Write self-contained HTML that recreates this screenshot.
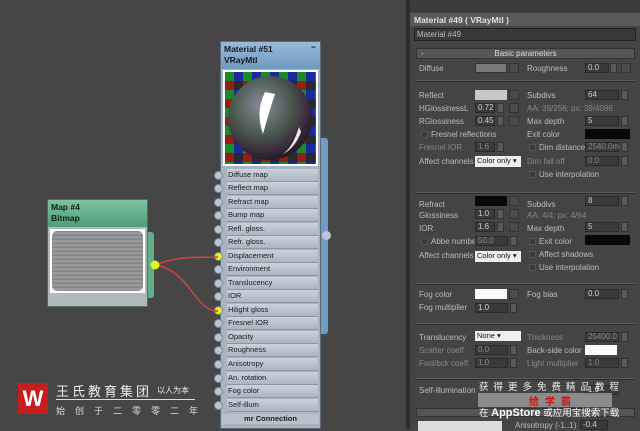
<!DOCTYPE html><html><head><meta charset="utf-8"><style>
*{margin:0;padding:0;box-sizing:border-box}
body{width:640px;height:429px;background:#464646;position:relative;overflow:hidden;font-family:"Liberation Sans","Noto Sans CJK SC",sans-serif;font-size:8px;color:#c8c8c8}
.a{position:absolute}
.l{position:absolute;font-size:8px;color:#bdbdbd;white-space:nowrap}
.f{position:absolute;height:10px;background:#3a3a3a;border:1px solid #2a2a2a;color:#ccc;font-size:8px;padding-left:2px;line-height:8px}
.sp{position:absolute;width:7px;height:10px;background:#5a5a5a;border:1px solid #333}
.sq{position:absolute;width:10px;height:10px;background:#4a4a4a;border:1px solid #333}
.cb{position:absolute;width:7px;height:7px;background:#3a3a3a;border:1px solid #555}
.sec{position:absolute;left:414px;width:221px;border:1px solid #2e2e2e;border-top-color:#5a5a5a}
.row{position:absolute;left:227px;width:91px;height:13px;background:linear-gradient(#c9d2dc,#aab6c2);border-bottom:1px solid #8b97a3;font-size:7.5px;color:#1a1a1a;padding-left:1px;line-height:12px}
.dot{position:absolute;left:214px;width:9px;height:9px;border-radius:50%;background:#b9c4d4;border:1px solid #7b8896}
</style></head><body>
<div class="a" style="left:406px;top:0;width:4px;height:429px;background:#2e2e2e"></div>
<div class="a" style="left:320px;top:138px;width:8px;height:196px;background:#6e9cc4;border-radius:0 3px 3px 0"></div>
<div class="a" style="left:322px;top:231px;width:9px;height:9px;border-radius:50%;background:#b9c4d4"></div>
<div class="a" style="left:220px;top:41px;width:101px;height:388px;background:#a8b4c0;border:1px solid #5d6b78"></div>
<div class="a" style="left:221px;top:42px;width:99px;height:27px;background:linear-gradient(#9bbad6,#6f9ac0);font-weight:bold;font-size:8.5px;color:#0f1a25;padding:2px 3px;line-height:11px">Material #51<br>VRayMtl<span style="position:absolute;right:4px;top:0">−</span></div>
<div class="a" style="left:223px;top:70px;width:95px;height:96px;background:#fff;padding:2px">
<svg width="91" height="92" viewBox="0 0 91 92"><defs><pattern id="ck" width="18" height="18" patternUnits="userSpaceOnUse"><rect width="9" height="9" fill="#1a8a2a"/><rect x="9" width="9" height="9" fill="#1a2a9a"/><rect y="9" width="9" height="9" fill="#9a1a1a"/><rect x="9" y="9" width="9" height="9" fill="#2a2a2a"/></pattern><radialGradient id="sp" cx="0.4" cy="0.35" r="0.7"><stop offset="0" stop-color="#8a8a9a"/><stop offset="0.5" stop-color="#4a5a50"/><stop offset="0.8" stop-color="#3a2a3a"/><stop offset="1" stop-color="#1a1a1a"/></radialGradient></defs><rect width="91" height="92" fill="url(#ck)"/><circle cx="45" cy="46" r="42" fill="url(#sp)"/><path d="M40 20 Q30 40 38 62 Q44 40 50 22Z" fill="#fff"/><path d="M74 55 Q68 75 58 82 Q70 76 76 60Z" fill="#eee"/></svg></div>
<div class="row" style="top:169px">Diffuse map</div><div class="dot" style="top:171px"></div>
<div class="row" style="top:182px">Reflect map</div><div class="dot" style="top:184px"></div>
<div class="row" style="top:196px">Refract map</div><div class="dot" style="top:198px"></div>
<div class="row" style="top:209px">Bump map</div><div class="dot" style="top:211px"></div>
<div class="row" style="top:223px">Refl. gloss.</div><div class="dot" style="top:225px"></div>
<div class="row" style="top:236px">Refr. gloss.</div><div class="dot" style="top:238px"></div>
<div class="row" style="top:250px">Displacement</div><div class="dot" style="top:252px;background:#e3f020"></div>
<div class="row" style="top:263px">Environment</div><div class="dot" style="top:265px"></div>
<div class="row" style="top:277px">Translucency</div><div class="dot" style="top:279px"></div>
<div class="row" style="top:290px">IOR</div><div class="dot" style="top:292px"></div>
<div class="row" style="top:304px">Hilight gloss</div><div class="dot" style="top:306px;background:#e3f020"></div>
<div class="row" style="top:317px">Fresnel IOR</div><div class="dot" style="top:319px"></div>
<div class="row" style="top:331px">Opacity</div><div class="dot" style="top:333px"></div>
<div class="row" style="top:344px">Roughness</div><div class="dot" style="top:346px"></div>
<div class="row" style="top:358px">Anisotropy</div><div class="dot" style="top:360px"></div>
<div class="row" style="top:372px">An. rotation</div><div class="dot" style="top:374px"></div>
<div class="row" style="top:385px">Fog color</div><div class="dot" style="top:387px"></div>
<div class="row" style="top:399px">Self-illum</div><div class="dot" style="top:401px"></div>
<div class="a" style="left:222px;top:414px;width:97px;height:10px;background:#b8c2cc;font-size:7.5px;color:#1a1a1a;text-align:center;font-weight:bold;line-height:10px">mr Connection</div>
<div class="a" style="left:146px;top:232px;width:8px;height:66px;background:#5fb08a;border-radius:0 3px 3px 0"></div>
<div class="a" style="left:47px;top:199px;width:101px;height:108px;background:#b0b8bc;border:1px solid #5a6a60"></div>
<div class="a" style="left:48px;top:200px;width:99px;height:27px;background:linear-gradient(#7fc3a0,#4f9e78);font-weight:bold;font-size:8.5px;color:#0f2015;padding:2px 3px;line-height:11px">Map #4<br>Bitmap</div>
<div class="a" style="left:50px;top:229px;width:95px;height:64px;background:#fff;padding:2px"><div style="width:91px;height:60px;border-radius:5px;background:repeating-linear-gradient(#858585 0 1px,#999 1px 3px,#909090 3px 4px)"></div></div>
<svg class="a" style="left:150px;top:250px" width="80" height="70"><path d="M5 15 C30 5 50 8 68 7" stroke="#c44" stroke-width="1.5" fill="none"/><path d="M5 15 C40 20 45 62 68 61" stroke="#c44" stroke-width="1.5" fill="none"/><circle cx="5" cy="15" r="4.5" fill="#e3f020"/></svg>
<div class="a" style="left:18px;top:383px;width:30px;height:31px;background:#c41e1e;color:#fff;font-weight:bold;font-size:22px;text-align:center;line-height:31px">W</div>
<div class="a" style="left:56px;top:381px;font-size:13px;color:#eee;letter-spacing:3px">王氏教育集团</div>
<div class="a" style="left:157px;top:385px;font-size:8px;color:#eee">以人为本</div>
<div class="a" style="left:56px;top:399px;width:139px;height:1px;background:#ddd"></div>
<div class="a" style="left:56px;top:404px;font-size:9px;color:#ddd;letter-spacing:10px">始创于二零零二年</div>
<div class="a" style="left:410px;top:0;width:230px;height:429px;background:#444"></div>
<div class="a" style="left:410px;top:0;width:230px;height:12px;background:#3b3b3b"></div>
<div class="a" style="left:410px;top:13px;width:230px;height:13px;background:#595959;font-weight:bold;color:#e0e0e0;font-size:8.5px;padding:2px 4px">Material #49 ( VRayMtl )</div>
<div class="a" style="left:414px;top:28px;width:222px;height:13px;background:#383838;border:1px solid #222;padding:1px 2px;color:#bbb">Material #49</div>
<div class="a" style="left:416px;top:48px;width:219px;height:11px;background:#555;border:1px solid #333;text-align:center;color:#ddd;line-height:9px">Basic parameters<span style="position:absolute;left:4px">-</span></div>
<div class="sec" style="top:80px;height:1px"></div><div class="sec" style="top:192px;height:1px"></div><div class="sec" style="top:283px;height:1px"></div><div class="sec" style="top:323px;height:1px"></div><div class="sec" style="top:378px;height:1px"></div>
<div class="l" style="left:419px;top:64px">Diffuse</div><div class="a" style="left:475px;top:63px;width:32px;height:10px;background:#787878;border:1px solid #333"></div><div class="sq" style="left:509px;top:63px"></div>
<div class="l" style="left:527px;top:64px">Roughness</div><div class="f" style="left:585px;top:63px;width:24px">0.0</div><div class="sp" style="left:610px;top:63px"></div><div class="sq" style="left:621px;top:63px"></div>
<div class="l" style="left:419px;top:91px">Reflect</div><div class="a" style="left:475px;top:90px;width:32px;height:10px;background:#c8c8c8"></div><div class="sq" style="left:509px;top:90px"></div>
<div class="l" style="left:527px;top:91px">Subdivs</div><div class="f" style="left:585px;top:90px;width:34px">64</div><div class="sp" style="left:621px;top:90px"></div>
<div class="l" style="left:419px;top:104px">HGlossiness</div><div class="l" style="left:464px;top:104px">L</div><div class="f" style="left:475px;top:103px;width:20px">0.72</div><div class="sp" style="left:497px;top:103px"></div><div class="sq" style="left:509px;top:103px"></div>
<div class="l" style="left:527px;top:104px;color:#888">AA: 39/256; px: 39/4096</div>
<div class="l" style="left:419px;top:117px">RGlossiness</div><div class="f" style="left:475px;top:116px;width:20px">0.45</div><div class="sp" style="left:497px;top:116px"></div><div class="sq" style="left:509px;top:116px"></div>
<div class="l" style="left:527px;top:117px">Max depth</div><div class="f" style="left:585px;top:116px;width:34px">5</div><div class="sp" style="left:621px;top:116px"></div>
<div class="cb" style="left:421px;top:131px"></div><div class="l" style="left:431px;top:130px">Fresnel reflections</div>
<div class="l" style="left:527px;top:130px">Exit color</div><div class="a" style="left:585px;top:129px;width:45px;height:10px;background:#080808"></div>
<div class="l" style="left:419px;top:143px;color:#888">Fresnel IOR</div><div class="f" style="left:475px;top:142px;width:20px;color:#888">1.6</div><div class="sp" style="left:497px;top:142px"></div>
<div class="cb" style="left:529px;top:144px"></div><div class="l" style="left:539px;top:143px">Dim distance</div><div class="f" style="left:585px;top:142px;width:34px;color:#888">2540.0m</div><div class="sp" style="left:621px;top:142px"></div>
<div class="l" style="left:419px;top:157px">Affect channels</div><div class="a" style="left:475px;top:156px;width:46px;height:11px;background:#eee;color:#111;font-size:7.5px;padding-left:2px">Color only ▾</div>
<div class="l" style="left:527px;top:157px;color:#888">Dim fall off</div><div class="f" style="left:585px;top:156px;width:34px;color:#888">0.0</div><div class="sp" style="left:621px;top:156px"></div>
<div class="cb" style="left:529px;top:171px"></div><div class="l" style="left:539px;top:170px">Use interpolation</div>
<div class="l" style="left:419px;top:200px">Refract</div><div class="a" style="left:475px;top:196px;width:32px;height:10px;background:#080808"></div><div class="sq" style="left:509px;top:196px"></div>
<div class="l" style="left:527px;top:200px">Subdivs</div><div class="f" style="left:585px;top:196px;width:34px">8</div><div class="sp" style="left:621px;top:196px"></div>
<div class="l" style="left:419px;top:211px">Glossiness</div><div class="f" style="left:475px;top:209px;width:20px">1.0</div><div class="sp" style="left:497px;top:209px"></div><div class="sq" style="left:509px;top:209px"></div>
<div class="l" style="left:527px;top:211px;color:#888">AA: 4/4; px: 4/64</div>
<div class="l" style="left:419px;top:224px">IOR</div><div class="f" style="left:475px;top:222px;width:20px">1.6</div><div class="sp" style="left:497px;top:222px"></div><div class="sq" style="left:509px;top:222px"></div>
<div class="l" style="left:527px;top:224px">Max depth</div><div class="f" style="left:585px;top:222px;width:34px">5</div><div class="sp" style="left:621px;top:222px"></div>
<div class="cb" style="left:421px;top:238px"></div><div class="l" style="left:431px;top:237px">Abbe number</div><div class="f" style="left:475px;top:236px;width:33px;color:#888">50.0</div><div class="sp" style="left:510px;top:236px"></div>
<div class="cb" style="left:529px;top:238px"></div><div class="l" style="left:539px;top:237px">Exit color</div><div class="a" style="left:585px;top:235px;width:45px;height:10px;background:#080808"></div>
<div class="l" style="left:419px;top:251px">Affect channels</div><div class="a" style="left:475px;top:251px;width:46px;height:11px;background:#eee;color:#111;font-size:7.5px;padding-left:2px">Color only ▾</div>
<div class="cb" style="left:529px;top:251px"></div><div class="l" style="left:539px;top:250px">Affect shadows</div>
<div class="cb" style="left:529px;top:264px"></div><div class="l" style="left:539px;top:263px">Use interpolation</div>
<div class="l" style="left:419px;top:290px">Fog color</div><div class="a" style="left:475px;top:289px;width:32px;height:10px;background:#fafafa"></div><div class="sq" style="left:509px;top:289px"></div>
<div class="l" style="left:527px;top:290px">Fog bias</div><div class="f" style="left:585px;top:289px;width:34px">0.0</div><div class="sp" style="left:621px;top:289px"></div>
<div class="l" style="left:419px;top:303px">Fog multiplier</div><div class="f" style="left:475px;top:303px;width:33px">1.0</div><div class="sp" style="left:510px;top:303px"></div>
<div class="l" style="left:419px;top:333px">Translucency</div><div class="a" style="left:475px;top:331px;width:46px;height:10px;background:#eee;color:#111;font-size:7.5px;padding-left:2px">None ▾</div>
<div class="l" style="left:527px;top:333px;color:#888">Thickness</div><div class="f" style="left:585px;top:332px;width:34px;color:#888">25400.0</div><div class="sp" style="left:621px;top:332px"></div>
<div class="l" style="left:419px;top:346px;color:#888">Scatter coeff</div><div class="f" style="left:475px;top:345px;width:33px;color:#888">0.0</div><div class="sp" style="left:510px;top:345px"></div>
<div class="l" style="left:527px;top:346px">Back-side color</div><div class="a" style="left:585px;top:345px;width:32px;height:10px;background:#fafafa"></div>
<div class="l" style="left:419px;top:359px;color:#888">Fwd/bck coeff</div><div class="f" style="left:475px;top:358px;width:33px;color:#888">1.0</div><div class="sp" style="left:510px;top:358px"></div>
<div class="l" style="left:527px;top:359px;color:#888">Light multiplier</div><div class="f" style="left:585px;top:358px;width:34px;color:#888">1.0</div><div class="sp" style="left:621px;top:358px"></div>
<div class="l" style="left:419px;top:386px">Self-illumination</div><div class="f" style="left:585px;top:385px;width:34px">1.0</div>
<div class="a" style="left:416px;top:408px;width:219px;height:9px;background:#555;border:1px solid #333"></div>
<div class="a" style="left:418px;top:421px;width:84px;height:10px;background:#ddd"></div>
<div class="l" style="left:515px;top:421px">Anisotropy (-1..1)</div><div class="f" style="left:580px;top:420px;width:28px">-0.4</div>
<div class="a" style="left:479px;top:379px;font-size:9.5px;color:#eee;letter-spacing:5px">获得更多免费精品教程</div>
<div class="a" style="left:478px;top:393px;width:134px;height:14px;background:rgba(200,200,200,.55)"></div>
<div class="a" style="left:529px;top:393px;font-size:10px;color:#d01010;font-weight:bold;letter-spacing:6px">给学霸</div>
<div class="a" style="left:479px;top:405px;font-size:9.5px;color:#fff">在 <b style="font-size:11px">AppStore</b> 或应用宝搜索下载</div>
</body></html>
